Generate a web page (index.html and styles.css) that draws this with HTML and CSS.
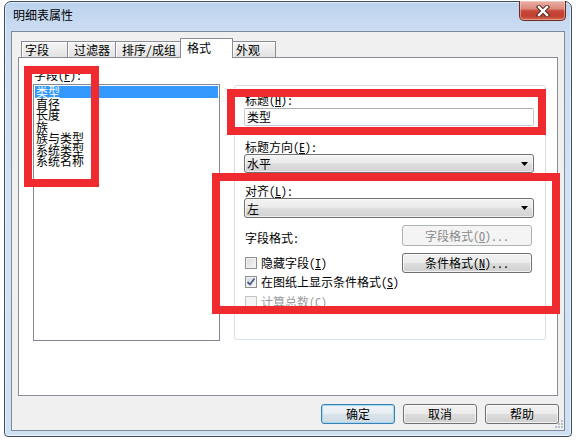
FILE: index.html
```html
<!DOCTYPE html>
<html lang="zh-CN">
<head>
  <meta charset="UTF-8">
  <title>明细表属性</title>
  <link rel="stylesheet" href="styles.css">
</head>
<body>

<div class="window">
  <div class="titlebar">
    <span class="title">明细表属性</span>
    <div class="close-btn">
      <svg width="16" height="12" viewBox="0 0 16 12">
        <path d="M4 2 L12 10 M12 2 L4 10" stroke="#5a2a24" stroke-width="4.4" stroke-linecap="square"/>
        <path d="M4 2 L12 10 M12 2 L4 10" stroke="#fff" stroke-width="2.4" stroke-linecap="square"/>
      </svg>
    </div>
  </div>

  <div class="client">
    <div class="tabs">
      <div class="tab tab-fields">字段</div>
      <div class="tab tab-filter">过滤器</div>
      <div class="tab tab-sort">排序/成组</div>
      <div class="tab tab-format active">格式</div>
      <div class="tab tab-look">外观</div>
    </div>

    <div class="panel">
      <div class="fields">
        <div class="label">字段(<u>F</u>):</div>
        <ul class="listbox">
          <li class="selected">类型</li>
          <li>直径</li>
          <li>长度</li>
          <li>族</li>
          <li>族与类型</li>
          <li>系统类型</li>
          <li>系统名称</li>
        </ul>
      </div>

      <div class="groupbox">
        <div class="label">标题(<u>H</u>):</div>
        <div class="textbox">类型</div>

        <div class="label label-gap">标题方向(<u>E</u>):</div>
        <div class="combo">
          <span>水平</span>
          <svg width="7" height="4" viewBox="0 0 7 4"><path d="M0 0h7L3.5 4z" fill="#000"/></svg>
        </div>

        <div class="label label-gap2">对齐(<u>L</u>):</div>
        <div class="combo combo-tall">
          <span>左</span>
          <svg width="7" height="4" viewBox="0 0 7 4"><path d="M0 0h7L3.5 4z" fill="#000"/></svg>
        </div>

        <div class="row row-format">
          <span class="row-label">字段格式:</span>
          <div class="btn btn-side disabled">字段格式(<u>O</u>)...</div>
        </div>

        <div class="row row-hide">
          <span class="check"><span class="box"></span>隐藏字段(<u>I</u>)</span>
          <div class="btn btn-side">条件格式(<u>N</u>)...</div>
        </div>

        <div class="row row-check">
          <span class="check">
            <span class="box">
              <svg width="10" height="10" viewBox="0 0 10 10"><path d="M1.5 5 L4 7.5 L8.5 1.5" fill="none" stroke="#4d5f8f" stroke-width="1.8"/></svg>
            </span>在图纸上显示条件格式(<u>S</u>)
          </span>
        </div>

        <div class="row row-check">
          <span class="check disabled"><span class="box"></span>计算总数(<u>C</u>)</span>
        </div>
      </div>
    </div>

    <div class="footer">
      <div class="btn btn-default">确定</div>
      <div class="btn">取消</div>
      <div class="btn">帮助</div>
    </div>

    <svg class="grip" width="8" height="8" viewBox="0 0 8 8">
      <rect x="6" y="0" width="2" height="2" fill="#b8c2cc"/>
      <rect x="3" y="3" width="2" height="2" fill="#b8c2cc"/>
      <rect x="6" y="3" width="2" height="2" fill="#b8c2cc"/>
      <rect x="0" y="6" width="2" height="2" fill="#b8c2cc"/>
      <rect x="3" y="6" width="2" height="2" fill="#b8c2cc"/>
      <rect x="6" y="6" width="2" height="2" fill="#b8c2cc"/>
    </svg>
  </div>
</div>

<!-- annotation boxes drawn over the dialog -->
<div class="mark mark-fields"></div>
<div class="mark mark-title"></div>
<div class="mark mark-align"></div>

</body>
</html>
```

FILE: styles.css
```css
body {
  margin: 0;
  background: #fff;
  font-family: "Noto Sans Mono CJK SC", "Noto Sans CJK SC", sans-serif;
  font-size: 12px;
  color: #111;
}

u { text-decoration: underline; text-underline-offset: 1px; }

.window {
  margin: 1px 0 0 4px;
  width: 568px;
  height: 436px;
  box-sizing: border-box;
  border: 1px solid #3d4c5e;
  border-radius: 7px 7px 4px 4px;
  background: linear-gradient(180deg, #bcd3ed 0, #cadcf1 28px, #d3e3f5 200px, #cfe0f3 100%);
  box-shadow: inset 0 0 0 1px rgba(255,255,255,0.55);
  padding: 0 6px 5px;
  display: flex;
  flex-direction: column;
}

.titlebar {
  height: 29px;
  flex: none;
  display: flex;
  align-items: flex-start;
}

.title {
  padding: 6px 0 0 2px;
  line-height: 14px;
  color: #000;
}

.close-btn {
  margin: -1px -1px 0 auto;
  width: 47px;
  height: 20px;
  box-sizing: border-box;
  border: 1px solid #6b2b23;
  border-top: none;
  border-radius: 0 0 5px 5px;
  background: linear-gradient(180deg, #eab1a7 0%, #dc8a7c 40%, #c7493b 52%, #c1402f 80%, #d46a52 100%);
  box-shadow: inset 0 0 0 1px rgba(255,220,210,0.45);
  display: flex;
  align-items: center;
  justify-content: center;
}

.client {
  flex: 1;
  position: relative;
  background: #f0f0f0;
  border: 1px solid #7d8a99;
  padding: 6px 6px 0 6px;
  display: flex;
  flex-direction: column;
}

/* tabs */
.tabs {
  height: 20px;
  flex: none;
  margin-bottom: -1px;
  padding-left: 3px;
  display: flex;
  align-items: flex-end;
}

.tab {
  box-sizing: border-box;
  height: 16px;
  margin-bottom: 1px;
  margin-left: -1px;
  line-height: 15px;
  border: 1px solid #898c95;
  border-bottom: none;
  background: linear-gradient(180deg, #f5f5f5, #e2e2e2);
  box-shadow: inset 1px 1px 0 #fff;
  color: #000;
  white-space: nowrap;
}

.tab-fields { width: 47px; padding-left: 3px; margin-left: 0; }
.tab-filter { width: 49px; padding-left: 6px; }
.tab-sort { width: 66px; padding-left: 6px; }
.tab-format { width: 53px; padding-left: 6px; }
.tab-look { width: 44px; padding-left: 3px; }

.tab.active {
  position: relative;
  z-index: 2;
  height: 20px;
  margin-bottom: 0;
  padding-top: 2px;
  line-height: 14px;
  background: #fff;
  box-shadow: none;
}

.panel {
  position: relative;
  z-index: 1;
  flex: none;
  box-sizing: border-box;
  width: 540px;
  height: 339px;
  background: #fff;
  border: 1px solid #898c95;
  padding: 10px 0 0 14px;
  display: flex;
  align-items: flex-start;
  gap: 14px;
}

.label {
  height: 14px;
  line-height: 14px;
  padding-left: 1px;
  color: #000;
  white-space: nowrap;
}

/* field list */
.listbox {
  list-style: none;
  margin: 2px 0 0;
  box-sizing: border-box;
  width: 187px;
  height: 257px;
  padding: 1px;
  border: 1px solid #828790;
  background: #fff;
}

.listbox li {
  line-height: 11.5px;
  height: 11.5px;
  padding-left: 1px;
  color: #000;
  white-space: nowrap;
}

.listbox li.selected {
  background: #3399ff;
  color: #fff;
}

/* right side group */
.groupbox {
  margin-top: 17px;
  box-sizing: border-box;
  width: 312px;
  height: 255px;
  border: 1px solid #d5dfe5;
  border-radius: 3px;
  padding: 7px 11px 0 9px;
  display: flex;
  flex-direction: column;
}

.groupbox > * { flex: none; }

.textbox {
  margin-top: 1px;
  box-sizing: border-box;
  height: 18px;
  line-height: 16px;
  padding-left: 2px;
  border: 1px solid #c5cad2;
  border-top-color: #abadb3;
  border-radius: 2px;
  background: #fff;
  color: #000;
}

.label-gap { margin-top: 14px; }
.label-gap2 { margin-top: 11px; }

.combo {
  box-sizing: border-box;
  height: 19px;
  line-height: 17px;
  padding: 0 5px 0 2px;
  border: 1px solid #707070;
  border-radius: 3px;
  background: linear-gradient(180deg, #f3f3f3 0%, #ebebeb 45%, #dddddd 55%, #d2d2d2 100%);
  box-shadow: inset 0 0 0 1px rgba(255,255,255,0.6);
  display: flex;
  align-items: center;
  justify-content: space-between;
  color: #000;
}

.combo-tall { height: 20px; }

.row {
  display: flex;
  align-items: center;
  height: 20px;
}

.row-format { margin-top: 7px; height: 21px; }
.row-format .row-label { padding: 4px 0 0 1px; line-height: 14px; color: #000; }
.row-hide { margin-top: 7px; }
.row-hide + .row-check { margin-top: -1px; }

.check {
  display: flex;
  align-items: center;
  height: 14px;
  line-height: 14px;
  padding-left: 1px;
  color: #000;
  white-space: nowrap;
}

.check .box {
  box-sizing: border-box;
  width: 12px;
  height: 12px;
  margin-right: 4px;
  border: 1px solid #8e8f8f;
  background: linear-gradient(135deg, #d4d7db, #f8f8f8);
  box-shadow: inset 0 0 0 1px #f2f2f2;
  display: flex;
  align-items: center;
  justify-content: center;
}

.check.disabled { color: #9d9d9d; }
.check.disabled .box { border-color: #c6c6c6; background: #f4f4f4; }

/* buttons */
.btn {
  box-sizing: border-box;
  height: 20px;
  line-height: 18px;
  text-align: center;
  border: 1px solid #707070;
  border-radius: 3px;
  background: linear-gradient(180deg, #f2f2f2 0%, #ebebeb 48%, #dddddd 52%, #cfcfcf 100%);
  box-shadow: inset 0 0 0 1px rgba(255,255,255,0.7);
  color: #000;
  white-space: nowrap;
  overflow: hidden;
}

.btn-side {
  width: 130px;
  margin: 0 2px 0 auto;
}

.row-format .btn-side { height: 21px; line-height: 19px; }

.btn.disabled {
  border-color: #adb2b5;
  background: #f4f4f4;
  box-shadow: none;
  color: #8a8a8a;
}

.footer {
  margin: 8px -1px 0 0;
  display: flex;
  justify-content: flex-end;
  gap: 8px;
}

.footer .btn { width: 74px; }

.btn-default {
  border-color: #3c7fb1;
  background: linear-gradient(180deg, #f0f4f7 0%, #e6edf2 48%, #d9e3ea 52%, #cfdbe4 100%);
  box-shadow: inset 0 0 0 1px #9fd8f3;
}

.grip {
  position: absolute;
  right: 1px;
  bottom: 2px;
}

/* red annotation rectangles */
.mark {
  position: absolute;
  z-index: 10;
  box-sizing: border-box;
  border: 8px solid #ef2b30;
}

.mark-fields { left: 24px; top: 66px; width: 75px; height: 121px; }
.mark-title { left: 227px; top: 89px; width: 319px; height: 46px; }
.mark-align { left: 212px; top: 173px; width: 348px; height: 141px; }
```
